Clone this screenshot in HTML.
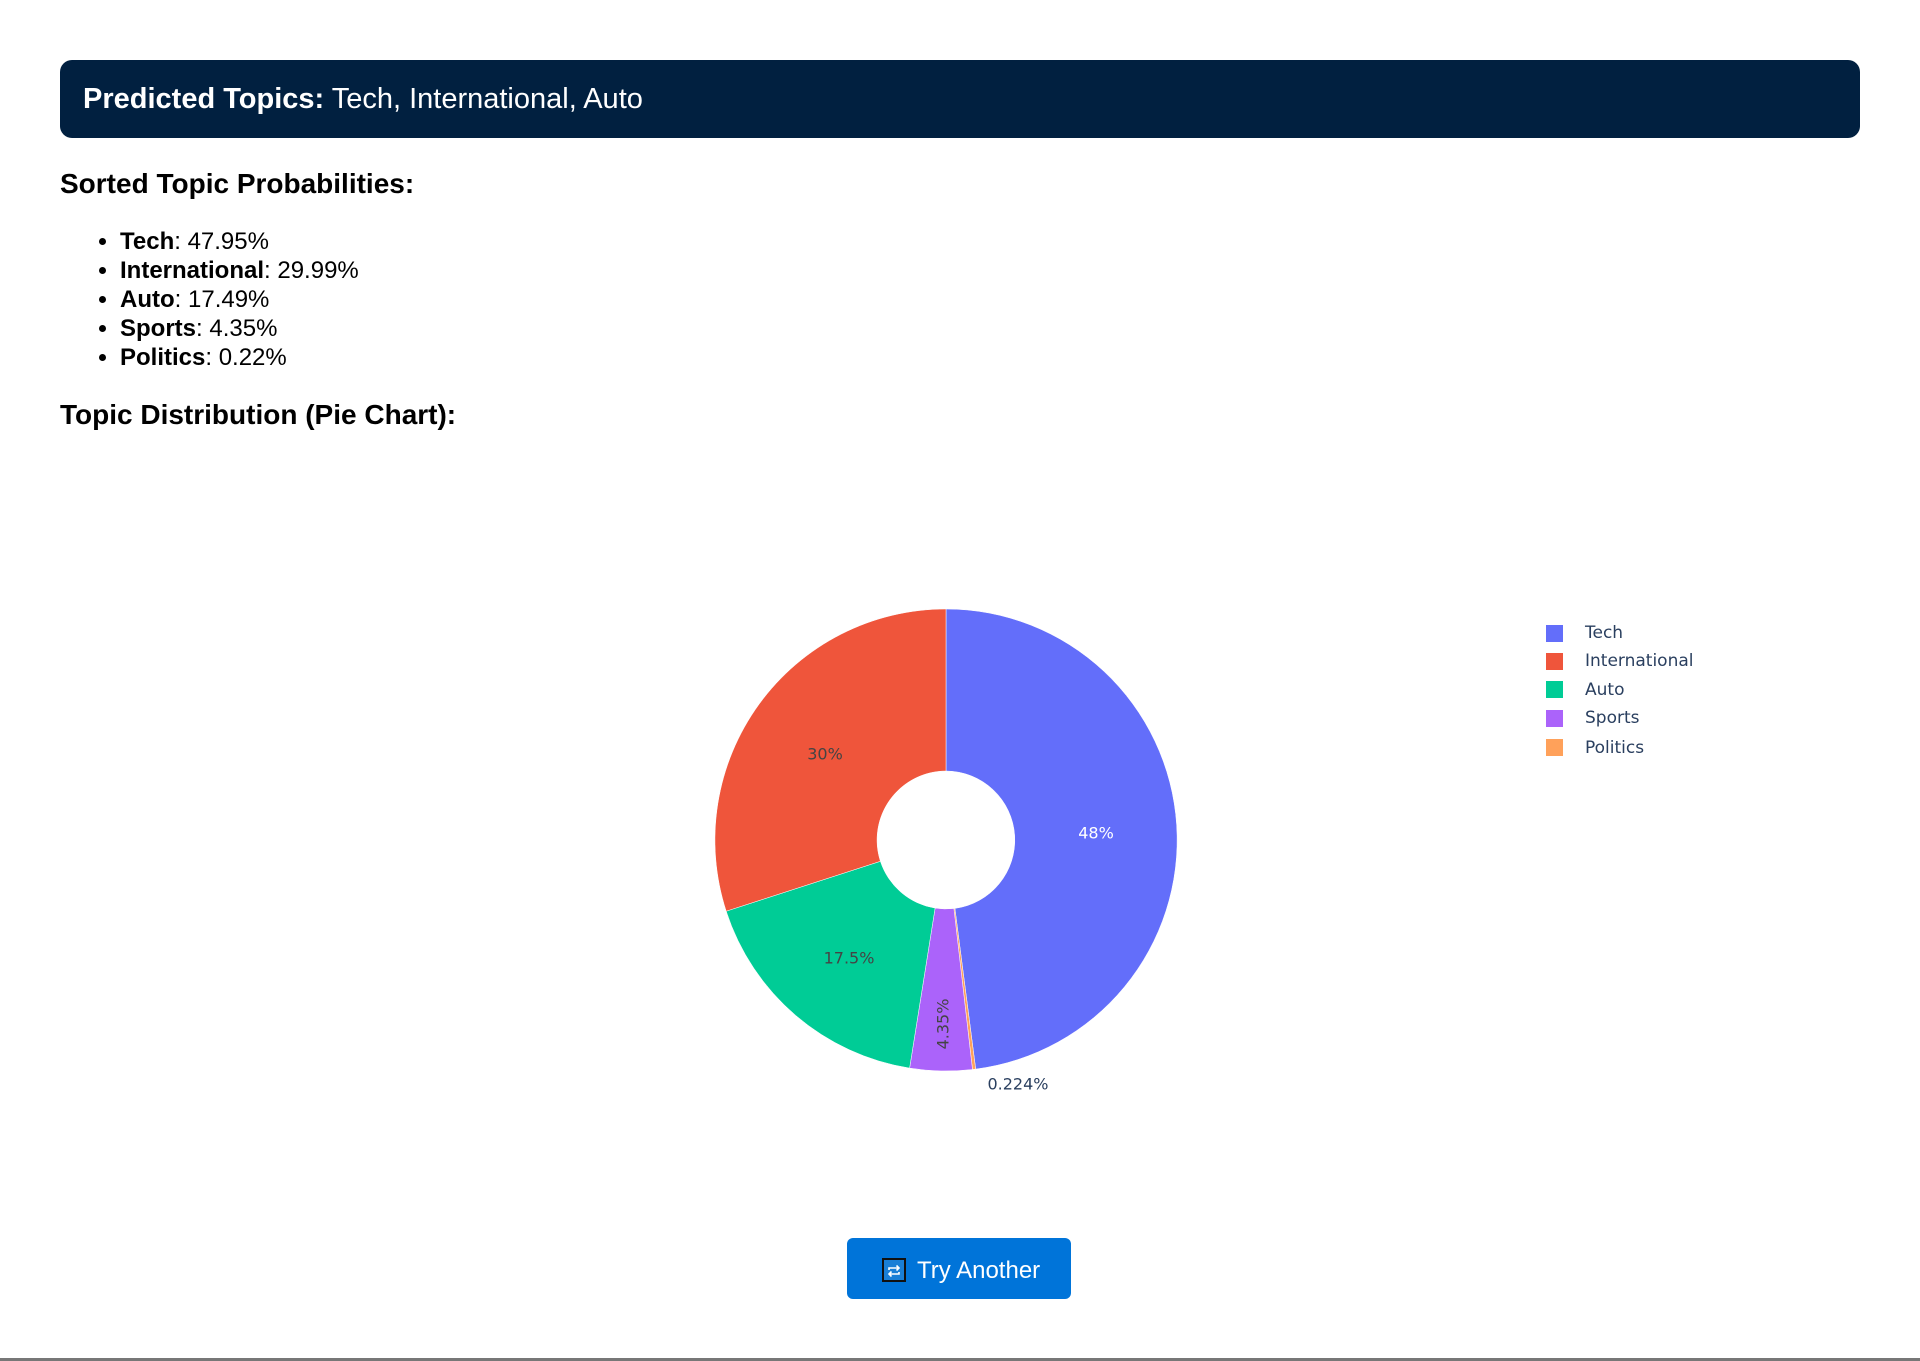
<!DOCTYPE html>
<html><head><meta charset="utf-8"><style>
html,body{margin:0;padding:0;background:#fff;width:1920px;height:1361px;overflow:hidden;position:relative;font-family:"Liberation Sans",Arial,sans-serif;}
.banner{position:absolute;left:60px;top:60px;width:1800px;height:78px;background:#012040;border-radius:12px;color:#fff;font-size:29px;line-height:78px;box-sizing:border-box;padding-left:23px;}
h3{position:absolute;left:60px;margin:0;font-size:28px;font-weight:bold;color:#000;}
ul{position:absolute;left:80px;top:227px;margin:0;padding-left:40px;font-size:24px;line-height:29px;color:#000;}
.btn{position:absolute;left:847px;top:1238px;width:224px;height:61px;background:#0074d9;border-radius:6px;color:#fff;font-size:24px;}
.btn .ic{position:absolute;left:35px;top:20px;width:24px;height:24px;border:2px solid #111;box-sizing:border-box;background:#1a7fd6;}
.btn .t{position:absolute;left:70px;top:19px;}
.line{position:absolute;left:0;top:1358px;width:1920px;height:3px;background:#777;}
</style></head><body>
<div class="banner"><b>Predicted Topics:</b> Tech, International, Auto</div>
<h3 style="top:168px">Sorted Topic Probabilities:</h3>
<ul>
<li><b>Tech</b>: 47.95%</li>
<li><b>International</b>: 29.99%</li>
<li><b>Auto</b>: 17.49%</li>
<li><b>Sports</b>: 4.35%</li>
<li><b>Politics</b>: 0.22%</li>
</ul>
<h3 style="top:399px">Topic Distribution (Pie Chart):</h3>
<svg style="position:absolute;left:0;top:0" width="1920" height="1361">
<g stroke="#fff" stroke-width="0.5">
<path d="M946,609 A231,231 0 0 1 975.7,1069.1 L954.9,908.4 A69,69 0 0 0 946,771 Z" fill="#636efa"/>
<path d="M975.7,1069.1 A231,231 0 0 1 972.5,1069.5 L953.9,908.5 A69,69 0 0 0 954.9,908.4 Z" fill="#ffa15a"/>
<path d="M972.5,1069.5 A231,231 0 0 1 909.6,1068.1 L935.1,908.1 A69,69 0 0 0 953.9,908.5 Z" fill="#ab63fa"/>
<path d="M909.6,1068.1 A231,231 0 0 1 726.2,911.2 L880.4,861.3 A69,69 0 0 0 935.1,908.1 Z" fill="#00cc96"/>
<path d="M726.2,911.2 A231,231 0 0 1 946,609 L946,771 A69,69 0 0 0 880.4,861.3 Z" fill="#ef553b"/>
</g>
<g font-family="DejaVu Sans,sans-serif" font-size="16" text-anchor="middle" dominant-baseline="central">
<text x="1096" y="833" fill="#fff">48%</text>
<text x="825" y="754" fill="#444">30%</text>
<text x="849" y="958" fill="#444">17.5%</text>
<text x="943" y="1024" fill="#444" transform="rotate(-90 943 1024)">4.35%</text>
<text x="1018" y="1084" fill="#2a3f5f">0.224%</text>
</g>
<g font-family="DejaVu Sans,sans-serif" font-size="17" fill="#2a3f5f" dominant-baseline="central">
<rect x="1546" y="625" width="17" height="17" fill="#636efa"/><text x="1585" y="633">Tech</text>
<rect x="1546" y="653" width="17" height="17" fill="#ef553b"/><text x="1585" y="661">International</text>
<rect x="1546" y="681" width="17" height="17" fill="#00cc96"/><text x="1585" y="690">Auto</text>
<rect x="1546" y="710" width="17" height="17" fill="#ab63fa"/><text x="1585" y="718">Sports</text>
<rect x="1546" y="739" width="17" height="17" fill="#ffa15a"/><text x="1585" y="748">Politics</text>
</g>
</svg>
<div class="btn"><div class="ic"><svg width="20" height="20" viewBox="0 0 20 20" fill="none" stroke="#fff" stroke-width="1.6"><path d="M5 9 V7 H15 M12.5 4.5 L15 7 L12.5 9.5"/><path d="M15 11 V13 H5 M7.5 10.5 L5 13 L7.5 15.5"/></svg></div><span class="t">Try Another</span></div>
<div class="line"></div>
</body></html>
